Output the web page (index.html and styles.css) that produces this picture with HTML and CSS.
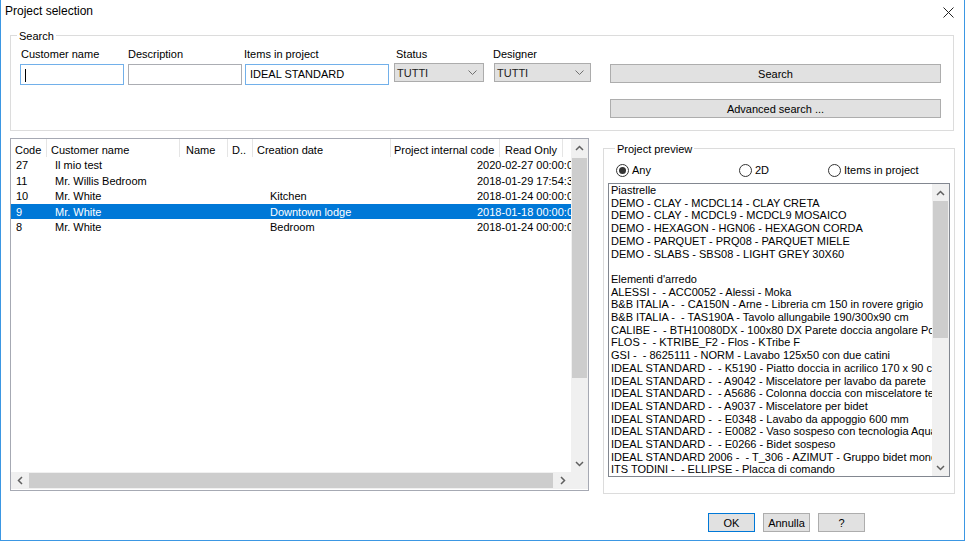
FILE: index.html
```html
<!DOCTYPE html>
<html lang="en">
<head>
    <meta charset="UTF-8">
    <title>Project selection</title>
    <link rel="stylesheet" href="styles.css">
</head>
<body>
<div class="window">
    <!-- Title bar -->
    <div class="titlebar">
        <span class="title">Project selection</span>
        <svg class="close" width="11" height="11" viewBox="0 0 11 11"><path d="M0.5 0.5L10.5 10.5M10.5 0.5L0.5 10.5" stroke="#222" stroke-width="1" fill="none"/></svg>
    </div>

    <div class="content">
        <!-- Search group -->
        <div class="group search-group">
            <span class="group-title">Search</span>
            <div class="search-row">
                <div class="field f-customer">
                    <label>Customer name</label>
                    <div class="input active"><span class="caret"></span></div>
                </div>
                <div class="field f-description">
                    <label>Description</label>
                    <div class="input"></div>
                </div>
                <div class="field f-items">
                    <label>Items in project</label>
                    <div class="input active">IDEAL STANDARD</div>
                </div>
                <div class="field f-status">
                    <label>Status</label>
                    <div class="combo">
                        <span>TUTTI</span>
                        <svg width="9" height="5" viewBox="0 0 9 5"><polyline points="0.5,0.5 4.5,4.5 8.5,0.5" fill="none" stroke="#707070" stroke-width="1"/></svg>
                    </div>
                </div>
                <div class="field f-designer">
                    <label>Designer</label>
                    <div class="combo">
                        <span>TUTTI</span>
                        <svg width="9" height="5" viewBox="0 0 9 5"><polyline points="0.5,0.5 4.5,4.5 8.5,0.5" fill="none" stroke="#707070" stroke-width="1"/></svg>
                    </div>
                </div>
                <div class="search-buttons">
                    <button class="btn">Search</button>
                    <button class="btn">Advanced search ...</button>
                </div>
            </div>
        </div>

        <div class="main">
            <!-- Project list -->
            <div class="list">
                <div class="list-body">
                    <div class="list-header">
                        <span class="c1">Code</span>
                        <span class="c2">Customer name</span>
                        <span class="c3">Name</span>
                        <span class="c4">D..</span>
                        <span class="c5">Creation date</span>
                        <span class="c6">Project internal code</span>
                        <span class="c7">Read Only</span>
                    </div>
                    <div class="row"><span class="r-code">27</span><span class="r-name">Il mio test</span><span class="r-desc"></span><span class="r-date">2020-02-27 00:00:00</span></div>
                    <div class="row"><span class="r-code">11</span><span class="r-name">Mr. Willis Bedroom</span><span class="r-desc"></span><span class="r-date">2018-01-29 17:54:30</span></div>
                    <div class="row"><span class="r-code">10</span><span class="r-name">Mr. White</span><span class="r-desc">Kitchen</span><span class="r-date">2018-01-24 00:00:00</span></div>
                    <div class="row selected"><span class="r-code">9</span><span class="r-name">Mr. White</span><span class="r-desc">Downtown lodge</span><span class="r-date">2018-01-18 00:00:00</span></div>
                    <div class="row"><span class="r-code">8</span><span class="r-name">Mr. White</span><span class="r-desc">Bedroom</span><span class="r-date">2018-01-24 00:00:00</span></div>
                </div>
                <div class="vscroll">
                    <div class="sb-btn"><svg width="9" height="6" viewBox="0 0 9 6"><polyline points="1,5 4.5,1.5 8,5" fill="none" stroke="#606060" stroke-width="1.5"/></svg></div>
                    <div class="thumb list-vthumb"></div>
                    <div class="sb-space"></div>
                    <div class="sb-btn"><svg width="9" height="6" viewBox="0 0 9 6"><polyline points="1,1 4.5,4.5 8,1" fill="none" stroke="#606060" stroke-width="1.5"/></svg></div>
                </div>
                <div class="hscroll">
                    <div class="sb-btn"><svg width="6" height="9" viewBox="0 0 6 9"><polyline points="5,1 1.5,4.5 5,8" fill="none" stroke="#606060" stroke-width="1.5"/></svg></div>
                    <div class="thumb list-hthumb"></div>
                    <div class="sb-space"></div>
                    <div class="sb-btn"><svg width="6" height="9" viewBox="0 0 6 9"><polyline points="1,1 4.5,4.5 1,8" fill="none" stroke="#606060" stroke-width="1.5"/></svg></div>
                </div>
                <div class="corner"></div>
            </div>

            <!-- Project preview -->
            <div class="group preview-group">
                <span class="group-title">Project preview</span>
                <div class="radios">
                    <div class="radio r-any"><span class="dot checked"></span>Any</div>
                    <div class="radio r-2d"><span class="dot"></span>2D</div>
                    <div class="radio"><span class="dot"></span>Items in project</div>
                </div>
                <div class="textbox">
                    <div class="text">Piastrelle
DEMO - CLAY - MCDCL14 - CLAY CRETA
DEMO - CLAY - MCDCL9 - MCDCL9 MOSAICO
DEMO - HEXAGON - HGN06 - HEXAGON CORDA
DEMO - PARQUET - PRQ08 - PARQUET MIELE
DEMO - SLABS - SBS08 - LIGHT GREY 30X60

Elementi d'arredo
ALESSI -  - ACC0052 - Alessi - Moka
B&amp;B ITALIA -  - CA150N - Arne - Libreria cm 150 in rovere grigio
B&amp;B ITALIA -  - TAS190A - Tavolo allungabile 190/300x90 cm
CALIBE -  - BTH10080DX - 100x80 DX Parete doccia angolare Porta
FLOS -  - KTRIBE_F2 - Flos - KTribe F
GSI -  - 8625111 - NORM - Lavabo 125x50 con due catini
IDEAL STANDARD -  - K5190 - Piatto doccia in acrilico 170 x 90 cm
IDEAL STANDARD -  - A9042 - Miscelatore per lavabo da parete
IDEAL STANDARD -  - A5686 - Colonna doccia con miscelatore termostatico
IDEAL STANDARD -  - A9037 - Miscelatore per bidet
IDEAL STANDARD -  - E0348 - Lavabo da appoggio 600 mm
IDEAL STANDARD -  - E0082 - Vaso sospeso con tecnologia AquaBlade
IDEAL STANDARD -  - E0266 - Bidet sospeso
IDEAL STANDARD 2006 -  - T_306 - AZIMUT - Gruppo bidet monocomando
ITS TODINI -  - ELLIPSE - Placca di comando</div>
                    <div class="vscroll">
                        <div class="sb-btn"><svg width="9" height="6" viewBox="0 0 9 6"><polyline points="1,5 4.5,1.5 8,5" fill="none" stroke="#606060" stroke-width="1.5"/></svg></div>
                        <div class="thumb text-vthumb"></div>
                        <div class="sb-space"></div>
                        <div class="sb-btn"><svg width="9" height="6" viewBox="0 0 9 6"><polyline points="1,1 4.5,4.5 8,1" fill="none" stroke="#606060" stroke-width="1.5"/></svg></div>
                    </div>
                </div>
            </div>
        </div>

        <!-- Dialog buttons -->
        <div class="footer">
            <button class="btn small default">OK</button>
            <button class="btn small">Annulla</button>
            <button class="btn small">?</button>
        </div>
    </div>
</div>
</body>
</html>
```

FILE: styles.css
```css
/* Base reset */
* { margin: 0; padding: 0; box-sizing: border-box; }

body {
    font-family: 'Liberation Sans', Arial, sans-serif;
    font-size: 11px;
    color: #000;
    background: #fff;
}

/* Dialog window */
.window {
    width: 965px;
    height: 541px;
    border: 1px solid #3b97e3;
    border-top: none;
    background: #fff;
}

.titlebar {
    height: 22px;
    display: flex;
    align-items: center;
    justify-content: space-between;
    padding: 0 10px 0 4px;
    font-size: 12px;
}

.close {
    margin-top: 2px;
}

.content {
    padding: 13px 0 0 9px;
}

/* Group boxes */
.group {
    border: 1px solid #dcdcdc;
}

.group-title {
    display: block;
    width: fit-content;
    background: #fff;
    line-height: 14px;
    padding: 0 2px;
    margin: -7px 0 0 6px;
}

.search-group {
    width: 944px;
    height: 96px;
}

.search-row {
    display: flex;
    align-items: flex-start;
    padding: 4px 0 0 9px;
}

.field label {
    display: block;
    line-height: 14px;
    margin-bottom: 3px;
    white-space: nowrap;
}

.f-customer { width: 104px; }
.f-customer label { padding-left: 1px; }
.f-description { width: 114px; margin-left: 4px; }
.f-items { width: 144px; margin-left: 3px; }
.f-items label { margin-left: -1px; }
.f-status { width: 90px; margin-left: 5px; }
.f-status label { padding-left: 2px; }
.f-designer { width: 97px; margin-left: 10px; }
.f-designer label { margin-left: -1px; }

.input {
    height: 21px;
    border: 1px solid #abadb3;
    padding: 0 4px;
    line-height: 19px;
    white-space: nowrap;
}

.input.active {
    border-color: #72b0ea;
}

.caret {
    display: inline-block;
    width: 1px;
    height: 13px;
    background: #000;
    vertical-align: middle;
}

.combo {
    height: 19px;
    margin-top: -1px;
    background: #e1e1e1;
    border: 1px solid #acacac;
    display: flex;
    align-items: center;
    justify-content: space-between;
    padding: 0 6px 0 2px;
    color: #222;
}

.search-buttons {
    width: 331px;
    margin-left: 19px;
    padding-top: 17px;
    display: flex;
    flex-direction: column;
    gap: 16px;
}

.btn {
    height: 19px;
    background: #e1e1e1;
    border: 1px solid #adadad;
    font-family: inherit;
    font-size: 11px;
    color: #000;
}

/* List + preview */
.main {
    display: flex;
    align-items: flex-start;
    margin-top: 7px;
}

.list {
    width: 579px;
    height: 353px;
    border: 1px solid #a6a9b3;
    padding-bottom: 1px;
    display: grid;
    grid-template-columns: 560px 17px;
    grid-template-rows: 333px 17px;
}

.list-body {
    overflow: hidden;
}

.list-header {
    display: flex;
    height: 18px;
}

.list-header span {
    flex: none;
    border-right: 1px solid #e5e5e5;
    padding: 4px 0 0 4px;
    line-height: 14px;
    white-space: nowrap;
    overflow: hidden;
}

.c1 { width: 36px; }
.c2 { width: 133px; }
.c3 { width: 48px; padding-left: 6px !important; }
.c4 { width: 25px; }
.c5 { width: 138px; }
.c6 { width: 109px; padding-left: 3px !important; }
.c7 { width: 63px; padding-left: 5px !important; }

.row {
    display: flex;
    height: 15.5px;
    line-height: 17px;
    white-space: nowrap;
}

.row span { flex: none; }
.r-code { width: 44px; padding-left: 5px; }
.r-name { width: 215px; }
.r-desc { width: 207px; }

.row.selected {
    background: #0078d7;
    color: #fff;
}

/* Scrollbars */
.vscroll {
    background: #f0f0f0;
    display: flex;
    flex-direction: column;
}

.hscroll {
    background: #f0f0f0;
    display: flex;
}

.sb-btn {
    flex: none;
    width: 17px;
    height: 17px;
    display: flex;
    align-items: center;
    justify-content: center;
}

.sb-space { flex: 1; }

.thumb {
    flex: none;
    background: #cdcdcd;
}

.list-vthumb { height: 220px; margin: 2px 1px 0; }
.list-hthumb { width: 524px; margin: 1px 0 1px 1px; }
.text-vthumb { height: 137px; margin: 0 1px; }

.corner { background: #f0f0f0; }

.preview-group {
    width: 352px;
    height: 346px;
    margin: 10px 0 0 14px;
    padding: 0 3px 0 4px;
}

.preview-group .group-title {
    margin-left: 7px;
}

.radios {
    display: flex;
    align-items: center;
    height: 14px;
    margin-top: 7px;
    padding-left: 8px;
}

.radio {
    display: flex;
    align-items: center;
    gap: 3px;
    white-space: nowrap;
}

.r-any { width: 123px; }
.r-2d { width: 89px; }

.dot {
    width: 13px;
    height: 13px;
    border: 1px solid #333;
    border-radius: 50%;
    display: flex;
    align-items: center;
    justify-content: center;
}

.dot.checked::after {
    content: "";
    width: 7px;
    height: 7px;
    border-radius: 50%;
    background: #333;
}

.textbox {
    width: 342px;
    height: 294px;
    margin-top: 6px;
    border: 1px solid #828790;
    display: grid;
    grid-template-columns: 323px 17px;
}

.text {
    padding-left: 2px;
    line-height: 12.7px;
    white-space: pre;
    overflow: hidden;
}

/* Dialog buttons */
.footer {
    display: flex;
    gap: 8px;
    margin-top: 19px;
    padding-left: 698px;
}

.btn.small {
    width: 47px;
}

.btn.default {
    border-color: #0078d7;
}
```
